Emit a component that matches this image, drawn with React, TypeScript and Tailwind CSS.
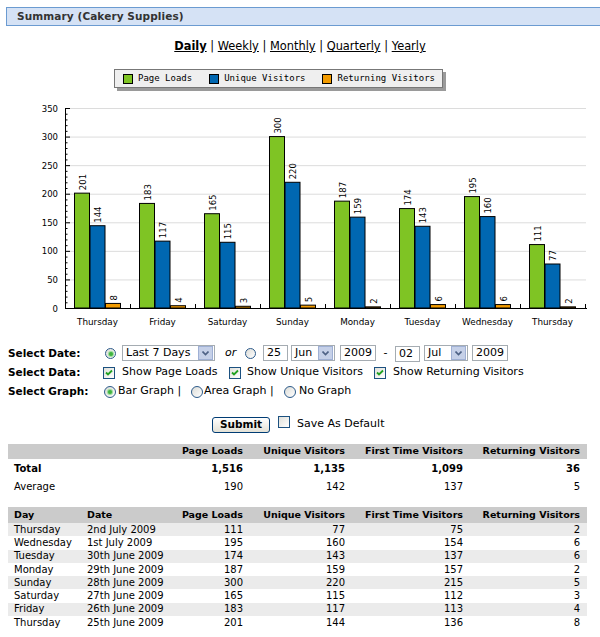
import React from "react";

const F = { fontFamily: '"DejaVu Sans", Verdana, sans-serif' };

const chartData: [string, number, number, number][] = [
  ["Thursday", 201, 144, 8],
  ["Friday", 183, 117, 4],
  ["Saturday", 165, 115, 3],
  ["Sunday", 300, 220, 5],
  ["Monday", 187, 159, 2],
  ["Tuesday", 174, 143, 6],
  ["Wednesday", 195, 160, 6],
  ["Thursday", 111, 77, 2],
];

const rows: [string, string, string, string, string, string][] = [
  ["Thursday", "2nd July 2009", "111", "77", "75", "2"],
  ["Wednesday", "1st July 2009", "195", "160", "154", "6"],
  ["Tuesday", "30th June 2009", "174", "143", "137", "6"],
  ["Monday", "29th June 2009", "187", "159", "157", "2"],
  ["Sunday", "28th June 2009", "300", "220", "215", "5"],
  ["Saturday", "27th June 2009", "165", "115", "112", "3"],
  ["Friday", "26th June 2009", "183", "117", "113", "4"],
  ["Thursday", "25th June 2009", "201", "144", "136", "8"],
];

const Y0 = 308;
const yv = (v: number) => Y0 - (v * 200) / 350;

function Chart() {
  const grid = [50, 100, 150, 200, 250, 300, 350];
  const minor: number[] = [];
  for (let v = 0; v <= 350; v += 10) minor.push(v);
  const colors = ["#7fc424", "#0067b1", "#f29b00"];
  return (
    <svg width={600} height={235} viewBox="0 95 600 235" className="block" style={{ fontFamily: '"DejaVu Sans", sans-serif' }}>
      {grid.map((g) => (
        <line key={g} x1={65} x2={586} y1={yv(g) + 0.5} y2={yv(g) + 0.5} stroke="#dcdcdc" strokeWidth={1} />
      ))}
      {chartData.map((d, i) => {
        const gx = 65 + 65 * i;
        const vals = [d[1], d[2], d[3]];
        return (
          <g key={i}>
            {vals.map((v, j) => {
              const x = gx + 9.5 + j * 15.5;
              const top = yv(v);
              return (
                <g key={j}>
                  <rect x={x} y={top} width={15} height={Y0 - top} fill={colors[j]} stroke="#000" strokeWidth={1} />
                  <text
                    transform={`translate(${x + 8},${top - 3}) rotate(-90)`}
                    fontSize={8.5}
                    dominantBaseline="central"
                    fill="#000"
                  >
                    {v}
                  </text>
                </g>
              );
            })}
            <text x={gx + 32.5} y={322} fontSize={8.8} textAnchor="middle" dominantBaseline="central" fill="#000">
              {d[0]}
            </text>
          </g>
        );
      })}
      {minor.map((v) => (
        <line key={v} x1={65} x2={v % 50 === 0 ? 70 : 67.5} y1={yv(v) + 0.5} y2={yv(v) + 0.5} stroke="#000" strokeWidth={1} />
      ))}
      {[0, 50, 100, 150, 200, 250, 300, 350].map((v) => (
        <text key={v} x={58} y={yv(v) + 0.5} fontSize={8.5} textAnchor="end" dominantBaseline="central" fill="#000">
          {v}
        </text>
      ))}
      <line x1={65.5} x2={65.5} y1={108} y2={Y0 + 1} stroke="#000" strokeWidth={1} />
      <line x1={65} x2={587} y1={Y0 + 0.5} y2={Y0 + 0.5} stroke="#000" strokeWidth={1} />
      {[1, 2, 3, 4, 5, 6, 7, 8].map((k) => (
        <line key={k} x1={65 + 65 * k + 0.5} x2={65 + 65 * k + 0.5} y1={Y0 - 4} y2={Y0} stroke="#000" strokeWidth={1} />
      ))}
    </svg>
  );
}

function Radio({ checked, size = 12 }: { checked?: boolean; size?: number }) {
  return (
    <span
      className="inline-flex items-center justify-center rounded-full border border-[#2c5a8a] bg-gradient-to-br from-[#dcdcd7] to-white shrink-0"
      style={{ width: size, height: size }}
    >
      {checked && <span className="block w-[4px] h-[4px] rounded-full bg-[#3fb33f] shadow-[0_0_1px_1px_#8fd88f]" />}
    </span>
  );
}

function Check({ checked }: { checked?: boolean }) {
  return (
    <span className="inline-flex items-center justify-center w-[12px] h-[12px] border border-[#1c5180] bg-gradient-to-br from-[#e0e0da] to-white shrink-0">
      {checked && (
        <svg width="8" height="8" viewBox="0 0 8 8">
          <path d="M1 3.5 L3 5.5 L7 1.5" fill="none" stroke="#21a121" strokeWidth="1.8" />
        </svg>
      )}
    </span>
  );
}

function Select({ text, w }: { text: string; w: number }) {
  return (
    <span className="inline-flex items-center h-[16px] border border-[#a5acb2] bg-white shrink-0" style={{ width: w }}>
      <span className="flex-1 pl-[3px] text-[11px] leading-[14px] text-black">{text}</span>
      <span className="flex items-center justify-center w-[15px] h-[14px] mr-[1px] bg-[#c5d0e8] border border-[#9fb0d4]">
        <svg width="7" height="5" viewBox="0 0 7 5">
          <path d="M0.5 0.5 L3.5 3.5 L6.5 0.5" fill="none" stroke="#4d6185" strokeWidth="1.6" />
        </svg>
      </span>
    </span>
  );
}

function Input({ text, w }: { text: string; w: number }) {
  return (
    <span className="inline-flex items-center h-[16px] border border-[#a5acb2] bg-white pl-[3px] text-[11px] leading-[14px] shrink-0" style={{ width: w }}>
      {text}
    </span>
  );
}

const cols = "grid grid-cols-[79px_88px_75px_102px_118px_117px] w-[579px] ml-[8px]";

export default function App() {
  return (
    <div className="w-[600px] h-[637px] overflow-hidden bg-white text-black" style={F}>
      {/* Header */}
      <div className="mt-[7px] ml-[6px] h-[19px] border border-r-0 border-[#6b9bd1] bg-[#d5e2f5] pl-[10px] text-[10.5px] font-bold leading-[17px] text-[#333] tracking-[0.1px]">
        Summary (Cakery Supplies)
      </div>

      {/* Tabs */}
      <div className="mt-[13px] h-[14px] text-center text-[11.4px] leading-[14px] pl-[-2px]">
        <span className="font-bold underline">Daily</span> | <span className="underline">Weekly</span> |{" "}
        <span className="underline">Monthly</span> | <span className="underline">Quarterly</span> |{" "}
        <span className="underline">Yearly</span>
      </div>

      {/* Legend */}
      <div
        className="mt-[16px] ml-[114px] w-[329px] h-[19px] border border-[#777] bg-[#efefef] shadow-[3px_3px_0_#9a9a9a] flex items-center text-[9px] leading-none"
        style={{ fontFamily: '"DejaVu Sans Mono", monospace' }}
      >
        <span className="ml-[8px] w-[10px] h-[10px] border border-black bg-[#7fc424]" />
        <span className="ml-[5px]">Page Loads</span>
        <span className="ml-[17px] w-[10px] h-[10px] border border-black bg-[#0067b1]" />
        <span className="ml-[5px]">Unique Visitors</span>
        <span className="ml-[17px] w-[10px] h-[10px] border border-black bg-[#f29b00]" />
        <span className="ml-[5px]">Returning Visitors</span>
      </div>

      {/* Chart */}
      <div className="mt-[7px]">
        <Chart />
      </div>

      {/* Form */}
      <div className="mt-[14px] text-[11px]">
        <div className="flex items-center h-[19px]">
          <span className="w-[105px] pl-[8px] text-[10.5px] font-bold shrink-0">Select Date:</span>
          <Radio checked size={11} />
          <span className="ml-[6px]">
            <Select text="Last 7 Days" w={93} />
          </span>
          <span className="ml-[10px] w-[20px] italic">or</span>
          <Radio size={11} />
          <span className="ml-[7px]">
            <Input text="25" w={25} />
          </span>
          <span className="ml-[3px]">
            <Select text="Jun" w={44} />
          </span>
          <span className="ml-[5px]">
            <Input text="2009" w={36} />
          </span>
          <span className="w-[19px] text-center">-</span>
          <Input text="02" w={25} />
          <span className="ml-[4px]">
            <Select text="Jul" w={44} />
          </span>
          <span className="ml-[4px]">
            <Input text="2009" w={36} />
          </span>
        </div>
        <div className="flex items-center h-[19px]">
          <span className="w-[103px] pl-[8px] text-[10.5px] font-bold shrink-0">Select Data:</span>
          <Check checked />
          <span className="ml-[7px] w-[107px] whitespace-nowrap">Show Page Loads</span>
          <Check checked />
          <span className="ml-[6px] w-[127px] whitespace-nowrap">Show Unique Visitors</span>
          <Check checked />
          <span className="ml-[7px] whitespace-nowrap">Show Returning Visitors</span>
        </div>
        <div className="flex items-center h-[19px]">
          <span className="w-[104px] pl-[8px] text-[10.5px] font-bold shrink-0">Select Graph:</span>
          <Radio checked />
          <span className="ml-[2px] w-[73px] whitespace-nowrap">Bar Graph |</span>
          <Radio />
          <span className="ml-[1px] w-[80px] whitespace-nowrap">Area Graph |</span>
          <Radio />
          <span className="ml-[3px] whitespace-nowrap">No Graph</span>
        </div>
        <div className="flex items-center h-[17px] mt-[15px]">
          <span className="ml-[212px] w-[58px] h-[16px] rounded-[3px] border border-[#003c74] bg-gradient-to-b from-white to-[#e3e1d6] flex items-center justify-center text-[10.5px] font-bold leading-none">
            Submit
          </span>
          <span className="ml-[8px]">
            <Check />
          </span>
          <span className="ml-[7px] whitespace-nowrap">Save As Default</span>
        </div>
      </div>

      {/* Summary table */}
      <div className="mt-[11px] text-[10px]">
        <div className={`${cols} h-[15px] items-center bg-[#cbcbcb] font-bold text-[9.5px]`}>
          <span />
          <span />
          <span className="text-right pr-[7px] whitespace-nowrap">Page Loads</span>
          <span className="text-right pr-[7px] whitespace-nowrap">Unique Visitors</span>
          <span className="text-right pr-[7px] whitespace-nowrap">First Time Visitors</span>
          <span className="text-right pr-[7px] whitespace-nowrap">Returning Visitors</span>
        </div>
        <div className={`${cols} h-[18px] items-center font-bold`}>
          <span className="pl-[6px]">Total</span>
          <span />
          <span className="text-right pr-[7px]">1,516</span>
          <span className="text-right pr-[7px]">1,135</span>
          <span className="text-right pr-[7px]">1,099</span>
          <span className="text-right pr-[7px]">36</span>
        </div>
        <div className={`${cols} h-[19px] items-center`}>
          <span className="pl-[6px]">Average</span>
          <span />
          <span className="text-right pr-[7px]">190</span>
          <span className="text-right pr-[7px]">142</span>
          <span className="text-right pr-[7px]">137</span>
          <span className="text-right pr-[7px]">5</span>
        </div>

        <div className={`${cols} mt-[11px] h-[16px] items-center bg-[#cbcbcb] font-bold text-[9.5px]`}>
          <span className="pl-[6px]">Day</span>
          <span>Date</span>
          <span className="text-right pr-[7px] whitespace-nowrap">Page Loads</span>
          <span className="text-right pr-[7px] whitespace-nowrap">Unique Visitors</span>
          <span className="text-right pr-[7px] whitespace-nowrap">First Time Visitors</span>
          <span className="text-right pr-[7px] whitespace-nowrap">Returning Visitors</span>
        </div>
        {rows.map((r, i) => (
          <div key={i} className={`${cols} h-[13.3px] items-center leading-none ${i % 2 === 0 ? "bg-[#ebebeb]" : "bg-white"}`}>
            <span className="pl-[6px] whitespace-nowrap">{r[0]}</span>
            <span className="whitespace-nowrap">{r[1]}</span>
            <span className="text-right pr-[7px]">{r[2]}</span>
            <span className="text-right pr-[7px]">{r[3]}</span>
            <span className="text-right pr-[7px]">{r[4]}</span>
            <span className="text-right pr-[7px]">{r[5]}</span>
          </div>
        ))}
      </div>
    </div>
  );
}
